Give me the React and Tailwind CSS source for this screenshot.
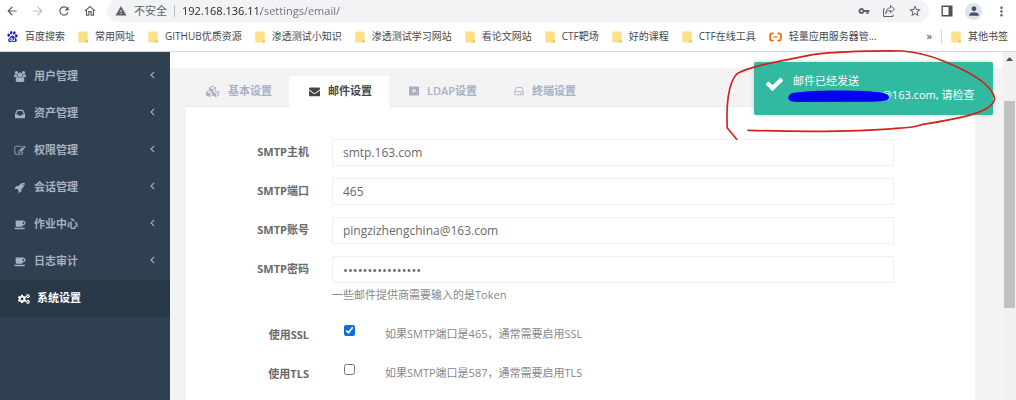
import React from "react";
import {
  MdArrowBack, MdArrowForward, MdRefresh, MdOutlineHome, MdWarning,
  MdVpnKey, MdStarBorder, MdMoreVert, MdPerson,
} from "react-icons/md";
import { SiBaidu } from "react-icons/si";
import { FaCogs } from "react-icons/fa";

const glyphs = {
  users: ["-64 0 1920 1792", "M529 896q-162 5-265 128h-134q-82 0-138-40.5t-56-118.5q0-353 124-353 6 0 43.5 21t97.5 42.5 119 21.5q67 0 133-23-5 37-5 66 0 139 81 256zm1071 637q0 120-73 189.5t-194 69.5h-874q-121 0-194-69.5t-73-189.5q0-53 3.5-103.5t14-109 26.5-108.5 43-97.5 62-81 85.5-53.5 111.5-20q10 0 43 21.5t73 48 107 48 135 21.5 135-21.5 107-48 73-48 43-21.5q61 0 111.5 20t85.5 53.5 62 81 43 97.5 26.5 108.5 14 109 3.5 103.5zm-1024-1277q0 106-75 181t-181 75-181-75-75-181 75-181 181-75 181 75 75 181zm704 384q0 159-112.5 271.5t-271.5 112.5-271.5-112.5-112.5-271.5 112.5-271.5 271.5-112.5 271.5 112.5 112.5 271.5zm576 225q0 78-56 118.5t-138 40.5h-134q-103-123-265-128 81-117 81-256 0-29-5-66 66 23 133 23 59 0 119-21.5t97.5-42.5 43.5-21q124 0 124 353zm-128-609q0 106-75 181t-181 75-181-75-75-181 75-181 181-75 181 75 75 181z"],
  inbox: ["0 128 1536 1536", "M1023 960h316q-1-3-2.5-8t-2.5-8l-212-496h-708l-212 496q-1 2-2.5 8t-2.5 8h316l95 192h320zM1536 990v482q0 26-19 45t-45 19h-1408q-26 0-45-19t-19-45v-482q0-62 25-123l238-552q10-25 36.500-42t52.500-17h832q26 0 52.500 17t36.500 42l238 552q25 61 25 123z"],
  edit: ["0 0 1792 1792", "M888 1184l116-116-152-152-116 116v56h96v96h56zm440-720q-16-16-33 1l-350 350q-17 17-1 33t33-1l350-350q17-17 1-33zm80 594v190q0 119-84.5 203.5t-203.5 84.5h-832q-119 0-203.5-84.5t-84.5-203.5v-832q0-119 84.5-203.5t203.5-84.5h832q63 0 117 25 15 7 18 23 3 17-9 29l-49 49q-14 14-32 8-23-6-45-6h-832q-66 0-113 47t-47 113v832q0 66 47 113t113 47h832q66 0 113-47t47-113v-126q0-13 9-22l64-64q15-15 35-7t20 29zm-96-738l288 288-672 672h-288v-288zm444 132l-92 92-288-288 92-92q28-28 68-28t68 28l152 152q28 28 28 68t-28 68z"],
  rocket: ["0 0 1792 1792", "M1440 448q0-40-28-68t-68-28-68 28-28 68 28 68 68 28 68-28 28-68zm224-288q0 249-75.5 430.5t-253.5 360.5q-81 80-195 176l-20 379q-2 16-16 26l-384 224q-7 4-16 4-12 0-23-9l-64-64q-13-14-8-32l85-276-281-281-276 85q-3 1-9 1-14 0-23-9l-64-64q-17-19-5-39l224-384q10-14 26-16l379-20q96-114 176-195 188-187 358-258t431-71q14 0 24 9.5t10 22.5z"],
  coffee: ["0 0 1920 1792", "M1664 640q0-80-56-136t-136-56h-64v384h64q80 0 136-56t56-136zm-1664 768h1792q0 106-75 181t-181 75h-1280q-106 0-181-75t-75-181zm1856-768q0 159-112.5 271.5t-271.5 112.5h-64v32q0 92-66 158t-158 66h-704q-92 0-158-66t-66-158v-736q0-26 19-45t45-19h1152q159 0 271.5 112.5t112.5 271.5z"],
  cubes: ["0 0 2304 1792", "M640 1632l384-192v-314l-384 164v342zm-64-454l404-173-404-173-404 173zm1088 454l384-192v-314l-384 164v342zm-64-454l404-173-404-173-404 173zm-448-293l384-165v-266l-384 164v267zm-64-379l441-189-441-189-441 189zm1088 518v416q0 36-19 67t-52 47l-448 224q-25 14-57 14t-57-14l-448-224q-4-2-7-4-2 2-7 4l-448 224q-25 14-57 14t-57-14l-448-224q-33-16-52-47t-19-67v-416q0-38 21.5-70t56.5-48l434-186v-400q0-38 21.5-70t56.5-48l448-192q23-10 50-10t50 10l448 192q35 16 56.5 48t21.5 70v400l434 186q36 16 57 48t21 70z"],
  envelope: ["0 0 1792 1792", "M1792 710v794q0 66-47 113t-113 47h-1472q-66 0-113-47t-47-113v-794q44 49 101 87 362 246 497 345 57 42 92.5 65.5t94.5 48 110 24.5h2q51 0 110-24.5t94.5-48 92.5-65.5q170-123 498-345 57-39 100-87zm0-294q0 79-49 151t-122 123q-376 261-468 325-10 7-42.5 31t-54 38.5-52 32.5-57.5 27-50 9h-2q-23 0-50-9t-57.5-27-52-32.5-54-38.5-42.5-31q-91-64-262-182.5t-205-142.5q-62-42-117-115.5t-55-136.5q0-78 41.5-130t118.5-52h1472q65 0 112.5 47t47.5 113z"],
  check: ["121 270 1550 1252", "M1671 566q0 40-28 68l-724 724-136 136q-28 28-68 28t-68-28l-136-136-362-362q-28-28-28-68t28-68l136-136q28-28 68-28t68 28l294 295 656-657q28-28 68-28t68 28l136 136q28 28 28 68z"],
};

function Glyph({ name, className }) {
  const [viewBox, d] = glyphs[name];
  return (
    <svg viewBox={viewBox} className={className} fill="currentColor" aria-hidden="true">
      <path d={d} />
    </svg>
  );
}

function FolderIcon() {
  return (
    <svg viewBox="0 0 10 12" className="h-3 w-[10px] shrink-0" aria-hidden="true">
      <path d="M1 .5h8a.7.7 0 0 1 .7.7v10.3H1a.7.7 0 0 1-.7-.7V1.200A.7.7 0 0 1 1 .5z" fill="#fbe08a" />
      <path d="M7.500 11.500V9.500l2.200-.6v2.600z" fill="#e9c25b" />
    </svg>
  );
}

function CloudBrandIcon() {
  return (
    <svg viewBox="0 0 14 10" className="h-[10px] w-[13px] shrink-0" fill="none" stroke="#f26a1b" strokeWidth="1.900" aria-hidden="true">
      <path d="M5 1.200H3.200Q1.200 1.200 1.200 3.200v3.600q0 2 2 2H5M9 1.200h1.800q2 0 2 2v3.600q0 2-2 2H9" />
      <path d="M5 5h4" strokeWidth="1.300" />
    </svg>
  );
}

function ShareIcon() {
  return (
    <svg viewBox="0 0 14 14" className="size-[14px]" fill="none" stroke="#5f6368" strokeWidth="1" strokeLinejoin="round" aria-hidden="true">
      <path d="M3 5H1.500v7.500h9.500V10.500" />
      <path d="M8.500 1.500l4 3.600-4 3.600V6.600C6 6.500 4.600 7.600 3.700 9.600c.1-3.300 1.800-5.500 4.800-5.900z" />
    </svg>
  );
}

function SidePanelIcon() {
  return (
    <svg viewBox="0 0 12 12" className="size-3" aria-hidden="true">
      <path d="M1.200 1.200h9.600v9.600H1.200z" fill="none" stroke="#4d5156" strokeWidth="1.400" />
      <path d="M7.500 1h3.500v10H7.500z" fill="#4d5156" />
    </svg>
  );
}

function LdapIcon() {
  return (
    <svg viewBox="0 0 10 10" className="size-[10px]" aria-hidden="true">
      <path d="M0 .5h10v9H0z" fill="#a7b1c2" />
      <path d="M3 3h4v3.500H3z" fill="#c3cbd8" />
      <path d="M4 4.300h2v1H4z" fill="#fff" />
    </svg>
  );
}

function TerminalIcon() {
  return (
    <svg viewBox="0 0 10 10" className="size-[10px]" fill="none" stroke="#a7b1c2" strokeWidth=".8" aria-hidden="true">
      <path d="M.6 5.500L2.200 1.500h5.600l1.600 4v3.400H.6zM.6 5.700h8.800" />
      <path d="M6 7.400h2" />
    </svg>
  );
}

const bookmarks = [
  { label: "百度搜索", icon: <SiBaidu className="size-[11px] shrink-0 text-[#2319dc]" /> },
  { label: "常用网址" },
  { label: "GITHUB优质资源" },
  { label: "渗透测试小知识" },
  { label: "渗透测试学习网站" },
  { label: "看论文网站" },
  { label: "CTF靶场" },
  { label: "好的课程" },
  { label: "CTF在线工具" },
  { label: "轻量应用服务器管...", icon: <CloudBrandIcon /> },
];

function Bookmark({ label, icon }) {
  return (
    <a href="#" className="flex shrink-0 items-center gap-[7px] whitespace-nowrap">
      {icon || <FolderIcon />}
      {label}
    </a>
  );
}

function BrowserBar() {
  return (
    <header className="border-b border-[#d5d7da] bg-white">
      <div className="flex h-[22px] items-center text-[#5f6368]">
        <div className="flex w-[107px] shrink-0 items-center gap-3 pl-[5px]">
          <button aria-label="后退"><MdArrowBack className="size-[14px]" /></button>
          <button aria-label="前进" className="text-[#bdc1c6]"><MdArrowForward className="size-[14px]" /></button>
          <button aria-label="刷新"><MdRefresh className="size-[14px]" /></button>
          <button aria-label="主页"><MdOutlineHome className="size-[14px]" /></button>
        </div>
        <div className="flex h-[22px] grow items-center rounded-full bg-[#f1f3f4] pr-[7px] pl-2">
          <MdWarning className="size-3 shrink-0" />
          <label htmlFor="url" className="ml-[7px] shrink-0 text-[11px]">不安全</label>
          <span className="mx-[7px] h-3 w-px shrink-0 bg-[#bdc1c6]" />
          <input
            id="url"
            defaultValue="192.168.136.11/settings/email/"
            className="min-w-0 grow bg-[linear-gradient(90deg,#202124_79px,#6b7075_79px)] bg-clip-text text-[11px] leading-4 text-transparent outline-none"
          />
          <div className="flex shrink-0 items-center gap-3">
            <button aria-label="密码"><MdVpnKey className="size-3" /></button>
            <button aria-label="分享"><ShareIcon /></button>
            <button aria-label="收藏"><MdStarBorder className="size-[14px]" /></button>
          </div>
        </div>
        <div className="flex w-[87px] shrink-0 items-center gap-3 pl-3">
          <button aria-label="侧边栏"><SidePanelIcon /></button>
          <button aria-label="用户" className="flex size-[17px] items-center justify-center rounded-full bg-[#dfe3ea]">
            <MdPerson className="size-[14px] text-[#44546f]" />
          </button>
          <button aria-label="菜单"><MdMoreVert className="size-[15px]" /></button>
        </div>
      </div>
      <nav className="flex h-[29px] items-center pr-2 pl-[7px] text-[10px] text-[#45484c]">
        <div className="flex min-w-0 grow items-center gap-[13px] overflow-hidden">
          {bookmarks.map((b) => <Bookmark key={b.label} {...b} />)}
        </div>
        <button aria-label="更多书签" className="mr-[9px] text-[11px]">»</button>
        <span className="mr-[9px] h-[14px] w-px bg-[#d5d7da]" />
        <Bookmark label="其他书签" />
      </nav>
    </header>
  );
}

const menu = [
  { label: "用户管理", icon: "users" },
  { label: "资产管理", icon: "inbox" },
  { label: "权限管理", icon: "edit" },
  { label: "会话管理", icon: "rocket" },
  { label: "作业中心", icon: "coffee" },
  { label: "日志审计", icon: "coffee" },
];

function Sidebar() {
  return (
    <aside className="w-[170px] shrink-0 bg-[#2f4050] pt-[6px] text-[11px] font-semibold text-[#a7b1c2]">
      {menu.map((m) => (
        <a key={m.label} href="#" className="flex h-[37px] items-center pr-[15px] pl-[14px]">
          <Glyph name={m.icon} className={m.icon === "inbox" ? "h-[10px] w-3" : "h-[11px] w-3"} />
          <span className="ml-2 grow">{m.label}</span>
          <svg viewBox="0 0 5 8" className="mb-1 h-2 w-[5px]" fill="none" stroke="currentColor" strokeWidth="1.100" aria-hidden="true">
            <path d="M4.200 .8L1 4l3.200 3.200" />
          </svg>
        </a>
      ))}
      <a href="#" className="flex h-[37px] items-center bg-[#293846] pl-[18px] text-white">
        <FaCogs className="size-3" />
        <span className="ml-[7px]">系统设置</span>
      </a>
    </aside>
  );
}

const tabs = [
  { label: "基本设置", icon: <Glyph name="cubes" className="h-[11px] w-[14px]" /> },
  { label: "邮件设置", icon: <Glyph name="envelope" className="size-[11px]" />, active: true },
  { label: "LDAP设置", icon: <LdapIcon /> },
  { label: "终端设置", icon: <TerminalIcon /> },
];

const fields = [
  { id: "host", label: "SMTP主机", value: "smtp.163.com" },
  { id: "port", label: "SMTP端口", value: "465" },
  { id: "account", label: "SMTP账号", value: "pingzizhengchina@163.com" },
  { id: "password", label: "SMTP密码", value: "abcdefghijklmnop", type: "password", help: "一些邮件提供商需要输入的是Token" },
];

const switches = [
  { id: "ssl", label: "使用SSL", help: "如果SMTP端口是465，通常需要启用SSL", on: true },
  { id: "tls", label: "使用TLS", help: "如果SMTP端口是587，通常需要启用TLS", on: false },
];

function EmailForm() {
  return (
    <form className="flex flex-col gap-3 pt-8 pr-[81px] text-[11px] text-[#676a6c]">
      {fields.map((f) => (
        <div key={f.id} className="grid grid-cols-[123px_1fr] gap-x-[23px]">
          <label htmlFor={f.id} className="pt-[5px] text-right leading-4 font-bold">{f.label}</label>
          <div>
            <input
              id={f.id}
              type={f.type || "text"}
              defaultValue={f.value}
              className={
                f.type === "password"
                  ? "block h-[27px] w-full border border-[#eff0f1] bg-white px-[10px] text-[13px] outline-none"
                  : "block h-[27px] w-full border border-[#eff0f1] bg-white px-[10px] text-[12px] outline-none"
              }
            />
            {f.help && <p className="pt-1 leading-4 text-[#85888b]">{f.help}</p>}
          </div>
        </div>
      ))}
      {switches.map((s) => (
        <div key={s.id} className="grid h-[27px] grid-cols-[123px_11px_1fr] pt-[10px]">
          <label htmlFor={s.id} className="pt-[2px] text-right leading-4 font-bold">{s.label}</label>
          <input id={s.id} type="checkbox" defaultChecked={s.on} className="ml-[35px] size-[11px] accent-[#0b6fd8]" />
          <p className="ml-[65px] pt-px leading-4 text-[#85888b]">{s.help}</p>
        </div>
      ))}
    </form>
  );
}

function Toast() {
  return (
    <div role="status" className="absolute top-[62px] right-[23px] flex h-[53px] w-[239px] rounded-[2px] bg-[#31ba9f] pt-3 pl-3 text-[11px] leading-[14px] text-white shadow-[0_0_4px_#ccc]">
      <Glyph name="check" className="mt-[3px] h-[14px] w-[17px]" />
      <div className="ml-[10px]">
        <p>邮件已经发送</p>
        <p className="pl-[89px] whitespace-nowrap">@163.com, 请检查</p>
      </div>
      <svg viewBox="0 0 900 300" className="pointer-events-none absolute top-[-22px] left-[-38px] h-[100px] w-[300px] max-w-none" fill="none" aria-hidden="true">
        <path d="M217 174C216 160 232 157 260 156C310 150 420 151 460 154C492 157 519 160 519 171C520 182 505 184 470 185L250 186C228 186 217 183 217 174z" fill="#0000f5" />
        <path d="M62 298L34 264C30 200 36 130 62 102C100 78 200 62 290 44C380 33 470 32 560 33C600 36 640 46 680 62C760 94 830 134 836 176C832 215 740 235 620 253C600 262 570 264 540 265C420 276 240 275 96 271" stroke="#d3211b" strokeWidth="5" strokeLinejoin="round" strokeLinecap="round" />
      </svg>
    </div>
  );
}

export default function App() {
  return (
    <div className="relative flex min-h-screen flex-col overflow-hidden bg-white font-['Open_Sans','Noto_Sans_CJK_SC',sans-serif]">
      <BrowserBar />
      <div className="flex grow">
        <Sidebar />
        <main className="flex min-w-0 grow flex-col bg-[#f3f3f4]">
          <div className="h-4 bg-white" />
          <div className="flex grow flex-col pt-2 pr-7 pl-4">
            <div role="tablist" className="flex h-[31px] text-[11px] font-semibold">
              {tabs.map((t) => (
                <button
                  key={t.label}
                  type="button"
                  role="tab"
                  aria-selected={!!t.active}
                  className={
                    t.active
                      ? "flex items-center gap-2 bg-white pr-[17px] pl-5 text-[#44474a]"
                      : "flex items-center gap-2 border-b border-[#e7eaec] pr-[17px] pl-5 text-[#a7b1c2]"
                  }
                >
                  {t.icon}
                  {t.label}
                </button>
              ))}
              <span className="grow border-b border-[#e7eaec]" />
            </div>
            <div className="grow bg-white">
              <EmailForm />
            </div>
          </div>
        </main>
        <div className="flex w-[13px] shrink-0 flex-col items-center bg-[#f1f1f1]" aria-hidden="true">
          <svg viewBox="0 0 7 4" className="mt-[5px] h-1 w-[7px]"><path d="M0 4L3.500 0 7 4z" fill="#505050" /></svg>
          <div className="mt-10 h-[207px] w-[11px] bg-[#c1c1c1]" />
        </div>
      </div>
      <Toast />
    </div>
  );
}
